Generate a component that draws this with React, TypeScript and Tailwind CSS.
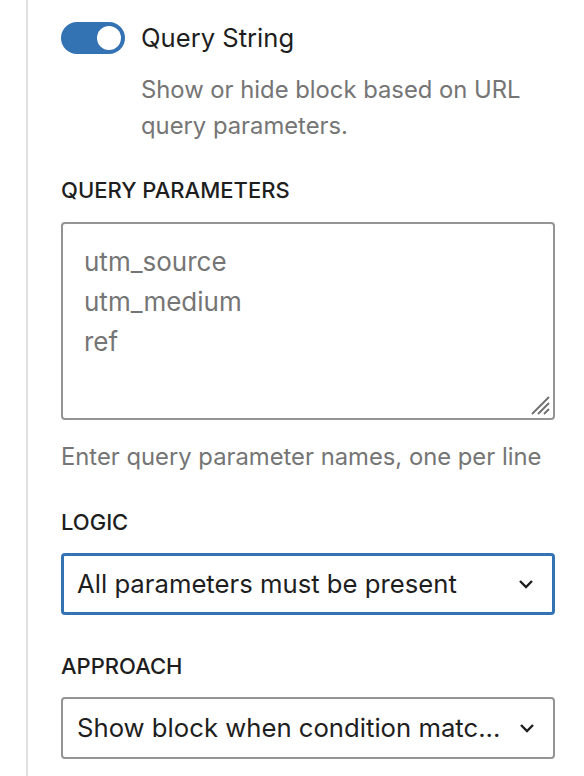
import React from 'react';

function Chevron() {
  return (
    <svg width="16" height="10" viewBox="0 0 16 10" fill="none" className="shrink-0">
      <path d="M2 2l6 6 6-6" stroke="#1e1e1e" strokeWidth="2.4" />
    </svg>
  );
}

function SectionLabel({ children }: { children: React.ReactNode }) {
  return (
    <div className="text-[22px] leading-[28px] font-medium uppercase text-[#1e1e1e]">
      {children}
    </div>
  );
}

function SelectBox({ value, focused }: { value: string; focused?: boolean }) {
  return (
    <div
      className={`flex items-center h-[62px] rounded-[4px] pr-[18px] gap-[12px] bg-white ${
        focused ? 'border-[3px] border-[#3373b3] pl-[13px]' : 'border-2 border-[#949494] pl-[14px]'
      }`}
    >
      <span className="flex-1 min-w-0 whitespace-nowrap text-[25.7px] text-[#1e1e1e]">{value}</span>
      <Chevron />
    </div>
  );
}

export default function App() {
  const params = ['utm_source', 'utm_medium', 'ref'];

  return (
    <div className="min-h-[776px] bg-white pl-[26px] font-['Inter',sans-serif] antialiased">
      <div className="min-h-[776px] border-l-2 border-[#e0e0e0] pl-[33px] pr-[29px] pt-[22px]">
        {/* Toggle */}
        <div className="flex items-center gap-[16px]">
          <div className="w-[64px] h-[32px] rounded-full bg-[#3373b3] flex items-center justify-end pr-[4px]">
            <div className="w-[24px] h-[24px] rounded-full bg-white" />
          </div>
          <span className="text-[25.6px] leading-[32px] text-[#1e1e1e]">Query String</span>
        </div>
        <p className="mt-[18px] pl-[80px] text-[23.8px] leading-[36px] text-[#757575]">
          Show or hide block based on URL query parameters.
        </p>

        {/* Query parameters */}
        <div className="mt-[32px]">
          <SectionLabel>Query Parameters</SectionLabel>
        </div>
        <div className="relative mt-[18px] h-[198px] rounded-[4px] border-2 border-[#949494] pt-[18px] pl-[21px]">
          {params.map(p => (
            <div key={p} className="text-[26px] leading-[40px] text-[#757575]">
              {p}
            </div>
          ))}
          <svg
            width="22"
            height="22"
            viewBox="0 0 22 22"
            className="absolute right-[2px] bottom-[2px]"
          >
            <path d="M3 20L20 3M9 20L20 9M15 20L20 15" stroke="#6e6e6e" strokeWidth="1.8" />
          </svg>
        </div>
        <p className="mt-[19px] text-[23.8px] leading-[36px] text-[#757575]">
          Enter query parameter names, one per line
        </p>

        {/* Logic */}
        <div className="mt-[33px]">
          <SectionLabel>Logic</SectionLabel>
        </div>
        <div className="mt-[17px]">
          <SelectBox value="All parameters must be present" focused />
        </div>

        {/* Approach */}
        <div className="mt-[37px]">
          <SectionLabel>Approach</SectionLabel>
        </div>
        <div className="mt-[17px]">
          <SelectBox value="Show block when condition matc..." />
        </div>
      </div>
    </div>
  );
}
